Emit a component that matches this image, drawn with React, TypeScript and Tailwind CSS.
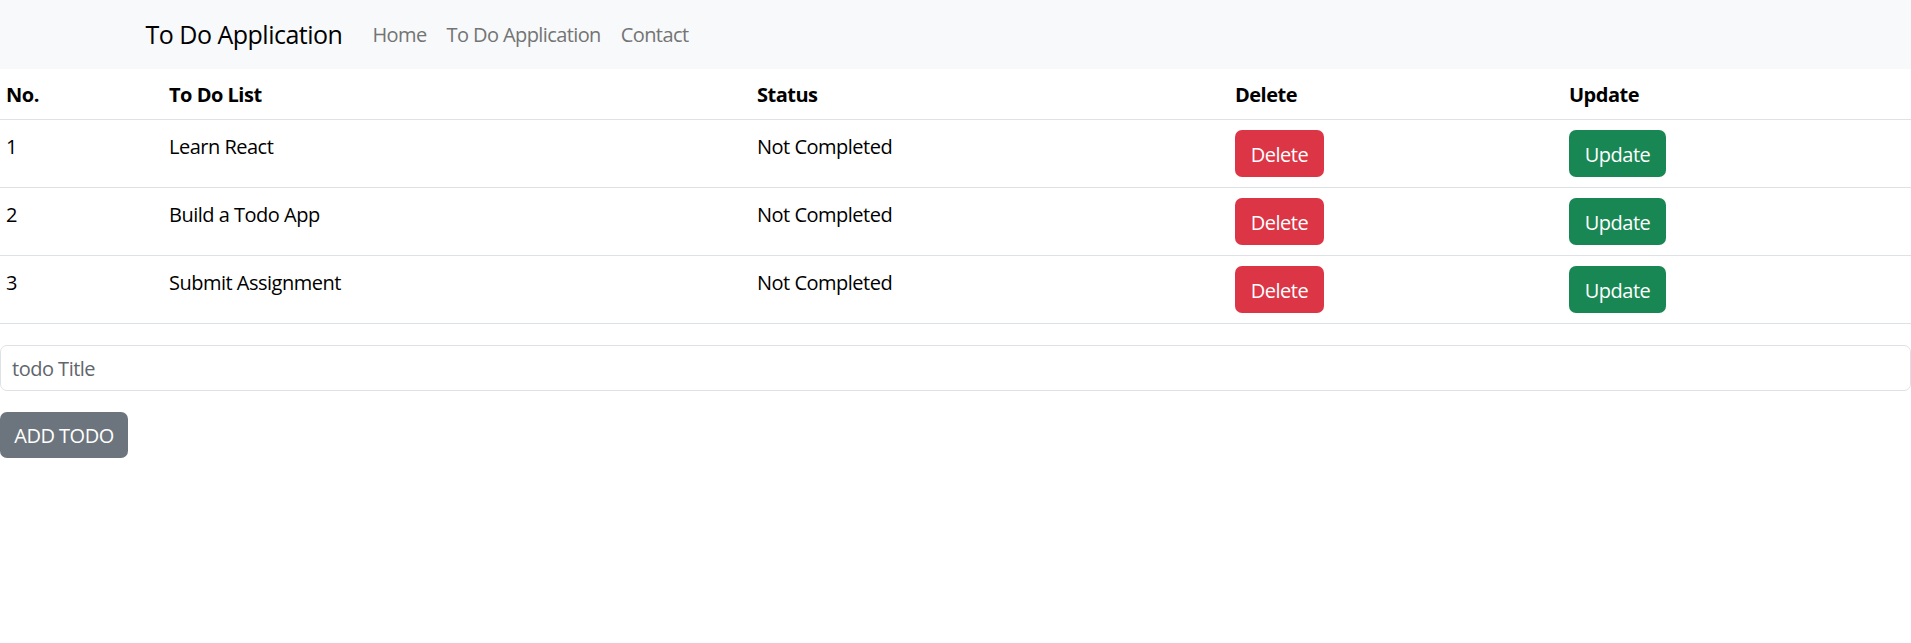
import React from "react";

type Todo = { id: number; title: string; completed: boolean };

const todos: Todo[] = [
  { id: 1, title: "Learn React", completed: false },
  { id: 2, title: "Build a Todo App", completed: false },
  { id: 3, title: "Submit Assignment", completed: false },
];

const font = { fontFamily: '"Open Sans", "Noto Sans", sans-serif' };

const Navbar = () => (
  <nav className="bg-[#f8f9fa] h-[69px] flex items-center">
    <div className="mx-auto w-full max-w-[1650px] px-[15px] flex items-center">
      <span className="text-[25px] leading-[37px] text-black mr-[20px] tracking-[-0.5px]">To Do Application</span>
      <ul className="flex items-center">
        {["Home", "To Do Application", "Contact"].map((link) => (
          <li key={link}>
            <a className="block px-[10px] text-[20px] leading-[30px] text-[#737474] tracking-[-0.6px]" href="#">
              {link}
            </a>
          </li>
        ))}
      </ul>
    </div>
  </nav>
);

const App = () => {
  return (
    <div className="min-h-screen bg-white text-[#212529] text-[20px] leading-[30px] tracking-[-0.5px]" style={font}>
      <Navbar />

      <table className="w-full table-fixed border-collapse mb-[21px]">
        <colgroup>
          <col className="w-[159px]" />
          <col className="w-[588px]" />
          <col className="w-[478px]" />
          <col className="w-[334px]" />
          <col />
        </colgroup>
        <thead>
          <tr className="border-b border-[#dee2e6]">
            <th className="text-left font-bold pt-[11px] pb-[9px] pl-[6px] pr-[10px] text-black">No.</th>
            <th className="text-left font-bold pt-[11px] pb-[9px] px-[10px] text-black">To Do List</th>
            <th className="text-left font-bold pt-[11px] pb-[9px] px-[10px] text-black">Status</th>
            <th className="text-left font-bold pt-[11px] pb-[9px] px-[10px] text-black">Delete</th>
            <th className="text-left font-bold pt-[11px] pb-[9px] px-[10px] text-black">Update</th>
          </tr>
        </thead>
        <tbody>
          {todos.map((todo) => (
            <tr key={todo.id} className="border-b border-[#dee2e6] align-top">
              <td className="pt-[12px] pl-[6px] pr-[10px] text-black">{todo.id}</td>
              <td className="pt-[12px] px-[10px] text-black">{todo.title}</td>
              <td className="pt-[12px] px-[10px] text-black">{todo.completed ? "Completed" : "Not Completed"}</td>
              <td className="p-[10px]">
                <button className="h-[47px] w-[89px] rounded-[7px] bg-[#dc3545] text-white text-[20px] pt-[2px]">Delete</button>
              </td>
              <td className="p-[10px]">
                <button className="h-[47px] w-[97px] rounded-[7px] bg-[#198754] text-white text-[20px] pt-[2px]">Update</button>
              </td>
            </tr>
          ))}
        </tbody>
      </table>

      <input
        className="block w-full h-[46px] px-[11px] border border-[#dee2e6] rounded-[7px] text-[20px] tracking-[-0.5px] placeholder:text-[#5f666d] outline-none"
        placeholder="todo Title"
        style={font}
      />

      <button className="mt-[21px] h-[46px] w-[128px] rounded-[7px] bg-[#6c757d] text-white text-[20px] pt-[2px]">
        ADD TODO
      </button>
    </div>
  );
};

export default App;
